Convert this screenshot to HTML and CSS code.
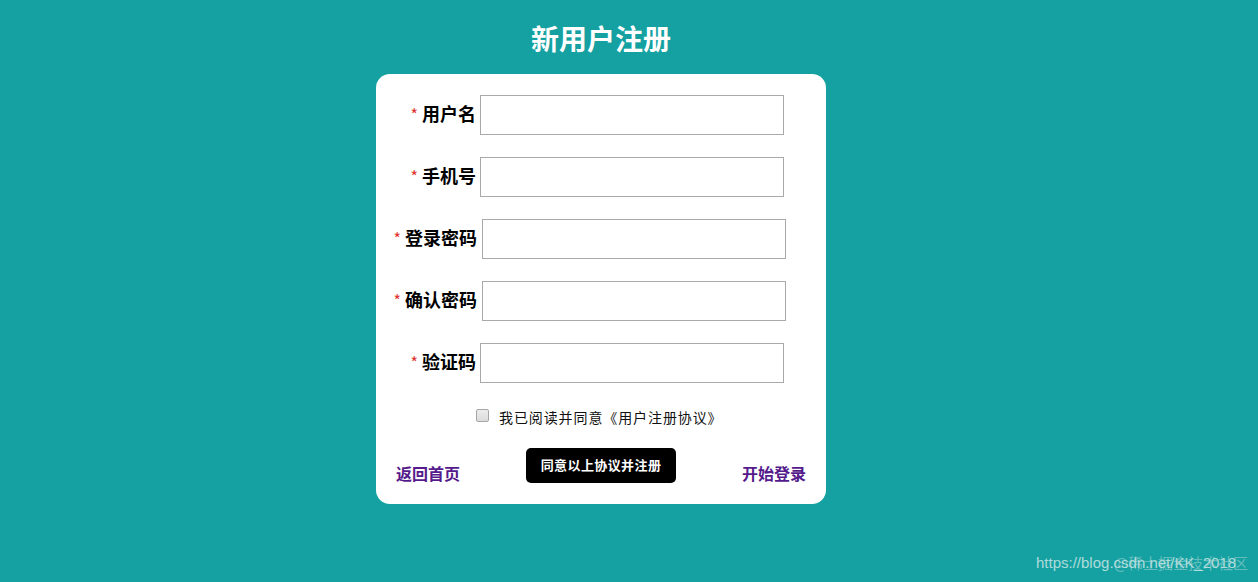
FILE: index.html
```html
<!DOCTYPE html>
<html lang="zh">
<head>
<meta charset="utf-8">
<title>新用户注册</title>
<link rel="stylesheet" href="styles.css">
</head>
<body>
<div class="page">
  <h1 class="title">新用户注册</h1>
  <div class="card">
    <div class="form">
      <div class="row"><label class="label"><span class="req">*</span>用户名</label><input class="field" type="text"></div>
      <div class="row"><label class="label"><span class="req">*</span>手机号</label><input class="field" type="text"></div>
      <div class="row wide"><label class="label"><span class="req">*</span>登录密码</label><input class="field" type="password"></div>
      <div class="row wide"><label class="label"><span class="req">*</span>确认密码</label><input class="field" type="password"></div>
      <div class="row"><label class="label"><span class="req">*</span>验证码</label><input class="field" type="text"></div>
    </div>
    <div class="agree">
      <input class="check" type="checkbox">
      <span class="agree-text">我已阅读并同意《用户注册协议》</span>
    </div>
    <div class="actions">
      <a class="link" href="#">返回首页</a>
      <button class="submit" type="button">同意以上协议并注册</button>
      <a class="link" href="#">开始登录</a>
    </div>
  </div>
</div>
<div class="watermark">
  <span class="wm-url">https://blog.csdn.net/KK_2018</span>
  <span class="wm-cn">@稀土掘金技术社区</span>
</div>
</body>
</html>
```

FILE: styles.css
```css
html, body {
  margin: 0;
  padding: 0;
  height: 100%;
}
body {
  background: #15a1a1;
  font-family: "Noto Sans CJK SC", "Liberation Sans", sans-serif;
  overflow: hidden;
  position: relative;
}
.page {
  width: 1202px;
  padding-top: 18px;
}
.title {
  margin: 0 0 16px;
  text-align: center;
  color: #fff;
  font-size: 28px;
  line-height: 40px;
  font-weight: 700;
}
.card {
  width: 450px;
  margin: 0 auto;
  background: #fff;
  border-radius: 14px;
  padding: 21px 0 19px;
  box-sizing: border-box;
}
.form {
  display: flex;
  flex-direction: column;
  gap: 22px;
}
.row {
  display: grid;
  grid-template-columns: 100px 304px;
  column-gap: 4px;
  align-items: center;
  height: 40px;
}
.row.wide {
  grid-template-columns: 101px 304px;
  column-gap: 5px;
}
.label {
  text-align: right;
  font-size: 18px;
  line-height: 24px;
  font-weight: 700;
  color: #000;
  white-space: nowrap;
  margin-top: -4px;
}
.req {
  color: #e0322c;
  font-weight: 400;
  font-size: 16px;
  margin-right: 4px;
}
.field {
  width: 304px;
  height: 40px;
  box-sizing: border-box;
  border: 1px solid #a9a9a9;
  background: #fff;
  margin: 0;
  padding: 0 6px;
}
.agree {
  margin-top: 25px;
  height: 18px;
  display: flex;
  align-items: center;
  padding-left: 100px;
}
.check {
  appearance: none;
  -webkit-appearance: none;
  box-sizing: border-box;
  width: 13px;
  height: 13px;
  margin: -3px 10px 0 0;
  border: 1px solid #a6a6a6;
  border-radius: 2px;
  background: linear-gradient(#ececec, #dcdcdc);
}
.agree-text {
  font-size: 14px;
  line-height: 18px;
  color: #111;
  letter-spacing: 0.9px;
}
.actions {
  margin-top: 22px;
  padding: 0 20px;
  display: flex;
  justify-content: space-between;
  align-items: flex-start;
}
.link {
  margin-top: 13px;
  font-size: 16px;
  line-height: 24px;
  font-weight: 700;
  color: #551a8b;
  text-decoration: none;
}
.submit {
  width: 150px;
  height: 35px;
  background: #000;
  color: #fff;
  border: none;
  border-radius: 5px;
  font-family: "Noto Sans CJK SC", sans-serif;
  font-size: 13px;
  font-weight: 700;
  letter-spacing: 0.4px;
  padding: 0 0 3px;
  margin: 0;
}
.watermark {
  position: absolute;
  right: 10px;
  bottom: 9px;
  height: 20px;
  width: 212px;
}
.wm-url {
  position: absolute;
  left: 0;
  top: 0;
  font-family: "Liberation Sans", sans-serif;
  font-size: 15px;
  line-height: 20px;
  color: rgba(225, 240, 240, 0.75);
  white-space: nowrap;
}
.wm-cn {
  position: absolute;
  right: 0;
  top: 0;
  font-size: 15px;
  line-height: 20px;
  color: rgba(200, 225, 225, 0.45);
  white-space: nowrap;
}
```
